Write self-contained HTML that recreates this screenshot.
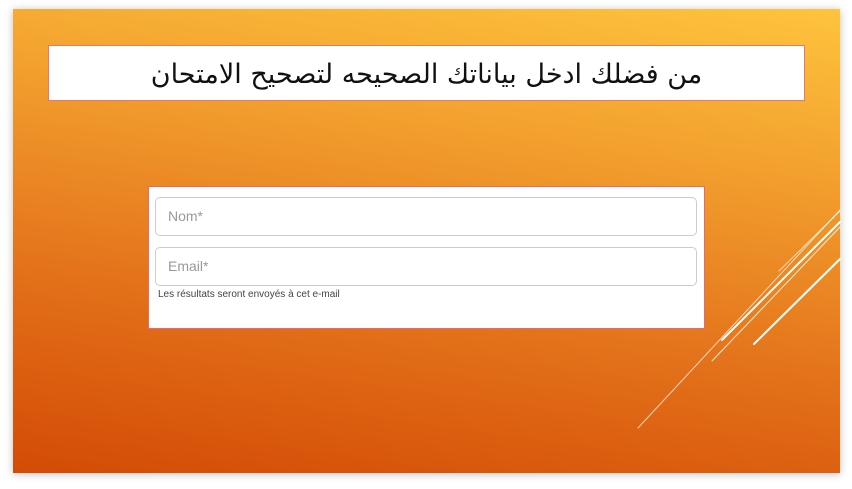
<!DOCTYPE html>
<html><head><meta charset="utf-8"><style>
html,body{margin:0;padding:0;width:852px;height:489px;background:#fff;overflow:hidden;font-family:"Liberation Sans",sans-serif}
.slide{position:absolute;left:13px;top:9px;width:827px;height:464px;background:linear-gradient(8deg,#d34b05 0%,#e3711a 35%,#f29f2e 70%,#fec43c 100%);box-shadow:0 1px 8px rgba(0,0,0,.25)}
.title{position:absolute;left:48px;top:45px;width:755px;height:54px;background:#fff;border:1px solid #e8786a;text-align:center;font-family:"DejaVu Sans",sans-serif;font-size:27px;line-height:58px;color:#111;direction:rtl}
.form{position:absolute;left:148px;top:186px;width:555px;height:141px;background:#fff;border:1px solid #e46a70}
.inp{position:absolute;left:6px;height:39px;border:1px solid #ccc;border-radius:5px;box-sizing:border-box;width:542px;font-size:14px;color:#999;line-height:37px;padding-left:12px}
.hint{position:absolute;left:9px;top:102px;font-size:10px;color:#444}
svg{position:absolute;left:0;top:0}
</style></head><body>
<div class="slide"></div>
<svg width="852" height="489">
<g stroke="#fff" stroke-linecap="round">
<line x1="638" y1="428" x2="840" y2="210" stroke-width="1" stroke-opacity=".7"/>
<line x1="722" y1="340" x2="840" y2="222" stroke-width="2"/>
<line x1="712" y1="361" x2="840" y2="227" stroke-width="1" stroke-opacity=".8"/>
<line x1="779" y1="271" x2="840" y2="211" stroke-width="1" stroke-opacity=".7"/>
<line x1="754" y1="344" x2="840" y2="259" stroke-width="2"/>
</g></svg>
<div class="title">من فضلك ادخل بياناتك الصحيحه لتصحيح الامتحان</div>
<div class="form">
<div class="inp" style="top:10px">Nom*</div>
<div class="inp" style="top:60px">Email*</div>
<div class="hint">Les résultats seront envoyés à cet e-mail</div>
</div>
</body></html>
